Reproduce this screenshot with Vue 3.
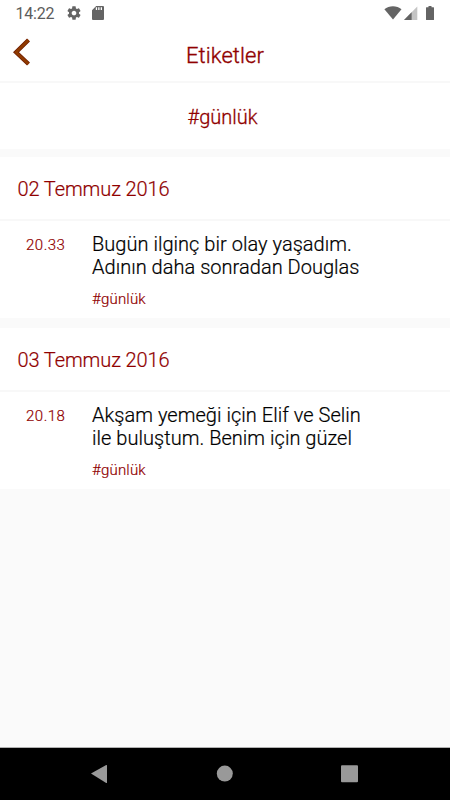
<script setup>
const groups = [
  { date: '02 Temmuz 2016', time: '20.33', lines: ['Bugün ilginç bir olay yaşadım.', 'Adının daha sonradan Douglas'], tag: '#günlük' },
  { date: '03 Temmuz 2016', time: '20.18', lines: ['Akşam yemeği için Elif ve Selin', 'ile buluştum. Benim için güzel'], tag: '#günlük' },
]
</script>

<template>
  <div class="screen">
    <div class="status">
      <span class="clock">14:22</span>
      <svg class="gear" width="16" height="16" viewBox="0 0 24 24"><path fill="#646464" d="M19.43 12.98c.04-.32.07-.64.07-.98s-.03-.66-.07-.98l2.11-1.65c.19-.15.24-.42.12-.64l-2-3.46c-.12-.22-.39-.3-.61-.22l-2.49 1c-.52-.4-1.080-.73-1.690-.98l-.38-2.650A.488.488 0 0 0 14 2h-4c-.25 0-.46.18-.49.42l-.38 2.650c-.61.25-1.170.59-1.690.98l-2.490-1c-.23-.09-.49 0-.61.22l-2 3.460c-.13.22-.07.49.12.64l2.110 1.650c-.04.32-.07.65-.07.98s.03.66.07.98l-2.110 1.650c-.19.15-.24.42-.12.64l2 3.460c.12.22.39.3.61.22l2.490-1c.52.4 1.080.73 1.690.98l.38 2.650c.03.24.24.42.49.42h4c.25 0 .46-.18.49-.42l.38-2.650c.61-.25 1.170-.59 1.690-.98l2.490 1c.23.09.49 0 .61-.22l2-3.460c.12-.22.07-.49-.12-.64l-2.110-1.650zM12 15.500c-1.930 0-3.500-1.570-3.500-3.500s1.570-3.500 3.500-3.500 3.500 1.570 3.500 3.500-1.570 3.500-3.500 3.500z" /></svg>
      <svg class="card" width="12" height="14" viewBox="0 0 12 14"><path fill="#646464" fill-rule="evenodd" d="M4.200 0H11q1 0 1 1v12q0 1-1 1H1q-1 0-1-1V4.300zM3.800 1.300v2.800h1.300V1.300zM6.200 1.300v2.800h1.300V1.300zM8.700 1.300v2.800H10V1.300z" /></svg>
      <span class="spacer"></span>
      <svg class="wifi" width="18" height="14" viewBox="0 0 18 14"><path fill="#646464" d="M.4 3.300C5-.7 12.900-.7 17.500 3.300L9 13.600z" /></svg>
      <svg class="signal" width="14" height="14" viewBox="0 0 14 14"><path fill="#c4c4c4" d="M0 14L13.300.5V14z" /><path fill="#646464" d="M0 14L7.600 6.300V14z" /></svg>
      <svg class="battery" width="8" height="14" viewBox="0 0 8 14"><path fill="#646464" d="M2.500 0h3v1.300H7.500q.5 0 .5.500V13.500q0 .5-.5.500H.5q-.5 0-.5-.5V1.800q0-.5.500-.5h2z" /></svg>
    </div>
    <header class="bar">
      <svg class="back" width="18" height="28" viewBox="0 0 18 28"><path d="M15.500 2L3 14.200 15.500 26" fill="none" stroke="#6e1c00" stroke-width="4.200" /><path d="M15.500 2L3 14.200 15.500 26" fill="none" stroke="#8f3a00" stroke-width="2.600" /></svg>
      <h1>Etiketler</h1>
    </header>
    <div class="filter"><span>#günlük</span></div>
    <section v-for="g in groups" :key="g.date" class="group">
      <h2>{{ g.date }}</h2>
      <article class="entry">
        <time>{{ g.time }}</time>
        <div>
          <p v-for="l in g.lines" :key="l">{{ l }}</p>
          <span class="tag">{{ g.tag }}</span>
        </div>
      </article>
    </section>
    <nav class="nav">
      <svg width="450" height="52" viewBox="0 0 450 52"><g fill="#999"><path d="M91 25.500L106.200 17q.8-.4.800.5v17q0 .9-.8.500z" /><circle cx="224.800" cy="25.600" r="8" /><rect x="341" y="17.200" width="17" height="17" rx="1" /></g></svg>
    </nav>
  </div>
</template>

<style>
body { margin: 0; }
</style>

<style scoped>
.screen { width: 450px; height: 800px; display: flex; flex-direction: column; background: #fafafa; font-family: Roboto, sans-serif; font-weight: 300; color: #900000; overflow: hidden; -webkit-text-stroke-width: 0.2px; }
.status { height: 28px; flex: none; display: flex; align-items: center; box-sizing: border-box; padding: 0 16px 2px 15px; background: #fff; }
.clock { font-size: 16px; font-weight: 400; line-height: 26px; letter-spacing: -0.2px; color: #5c5c5c; padding: 2px 0 0 0.5px; -webkit-text-stroke-width: 0; }
.gear { margin-left: 12px; }
.card { margin-left: 10px; }
.spacer { flex: 1; }
.signal { margin-left: 2px; }
.battery { margin-left: 8px; }
.bar { height: 53px; flex: none; display: grid; grid-template-columns: 40px 1fr 40px; background: #fff; border-bottom: 2px solid #f8f8f8; }
.back { margin: 10px 0 0 12.500px; }
h1 { margin: 0; text-align: center; font-size: 22px; line-height: 55px; font-weight: 300; letter-spacing: 0.1px; -webkit-text-stroke-width: 0.35px; }
.filter { height: 66px; flex: none; text-align: center; background: #fff; font-size: 20px; line-height: 68px; padding-right: 5px; -webkit-text-stroke-width: 0.3px; }
.group { flex: none; background: #fff; margin-top: 8px; }
.group + .group { margin-top: 10px; }
h2 { margin: 0; height: 62px; line-height: 64px; padding-left: 17.500px; font-size: 20px; font-weight: 300; letter-spacing: -0.1px; border-bottom: 2px solid #f8f8f8; }
.entry { display: grid; grid-template-columns: 66px 1fr; height: 85px; padding: 12px 0 0 26px; }
time { font-size: 15px; line-height: 24px; letter-spacing: 0.5px; }
p { margin: 0; font-size: 20px; line-height: 23px; letter-spacing: 0.03px; color: #000; white-space: nowrap; }
.tag { display: block; margin-top: 11px; font-size: 15px; letter-spacing: 0.2px; line-height: 18px; }
.nav { height: 52px; flex: none; margin-top: auto; background: #000; border-top: 1px solid #b0b0b0; }
.nav svg { display: block; }
</style>
